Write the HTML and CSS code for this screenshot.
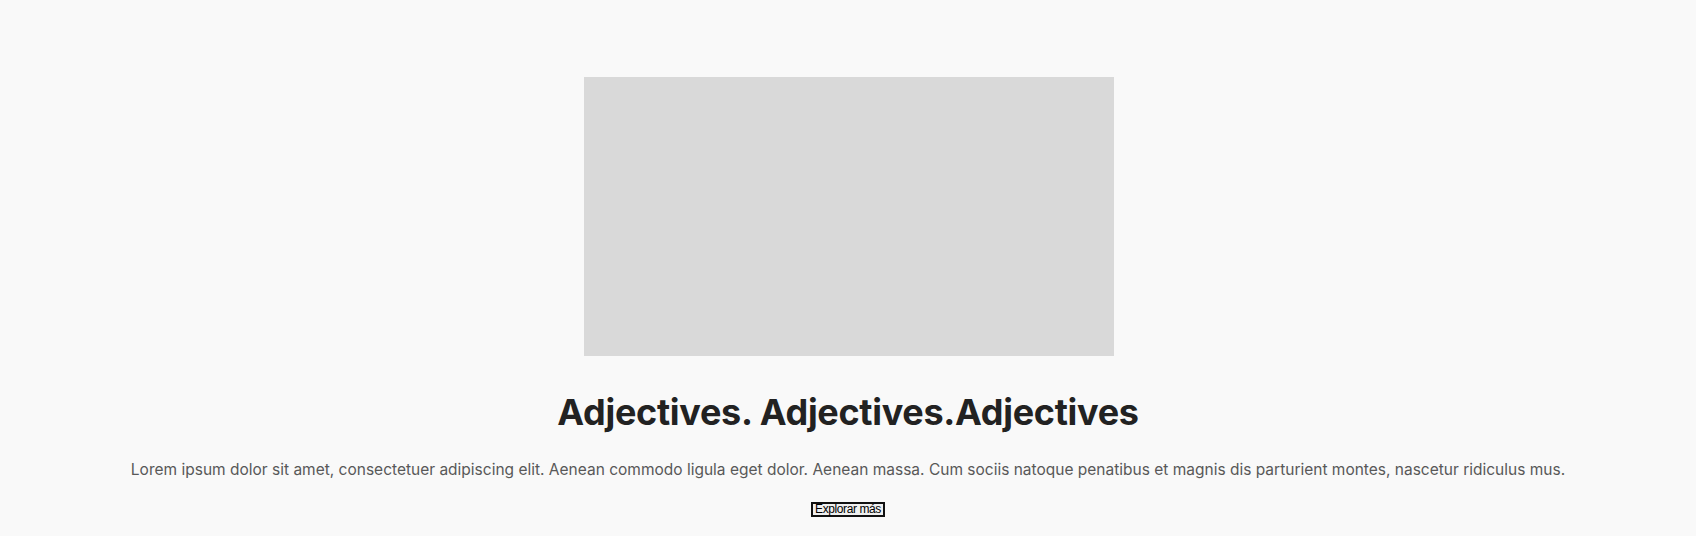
FILE: index.html
```html
<!DOCTYPE html>
<html lang="es">
<head>
<meta charset="utf-8">
<title>Adjectives</title>
<link rel="stylesheet" href="styles.css">
</head>
<body>
<section class="hero">
  <div class="hero-image"></div>
  <h1 class="hero-title">Adjectives. Adjectives.Adjectives</h1>
  <p class="hero-text">Lorem ipsum dolor sit amet, consectetuer adipiscing elit. Aenean commodo ligula eget dolor. Aenean massa. Cum sociis natoque penatibus et magnis dis parturient montes, nascetur ridiculus mus.</p>
  <button class="hero-btn">Explorar más</button>
</section>
</body>
</html>
```
FILE: styles.css
```css
html, body {
  margin: 0;
  padding: 0;
  background: #f9f9f9;
}
body {
  font-family: Inter, "Liberation Sans", sans-serif;
}
.hero {
  display: flex;
  flex-direction: column;
  align-items: center;
  padding-top: 77px;
}
.hero-image {
  width: 530px;
  height: 279px;
  margin-left: 2px;
  background: #d9d9d9;
}
.hero-title {
  margin: 34px 0 0;
  font-size: 36px;
  line-height: 44px;
  font-weight: 700;
  letter-spacing: -0.3px;
  color: #222;
}
.hero-text {
  margin: 24px 0 0;
  font-size: 15.5px;
  line-height: 24px;
  color: #585858;
  text-align: center;
}
.hero-btn {
  margin-top: 20px;
  font-family: "Liberation Sans", Arial, sans-serif;
  font-size: 12px;
  letter-spacing: -0.4px;
  line-height: 11px;
  padding: 0 2px;
  border: 2px solid #111;
  background: #efefef;
  color: #000;
}
```
